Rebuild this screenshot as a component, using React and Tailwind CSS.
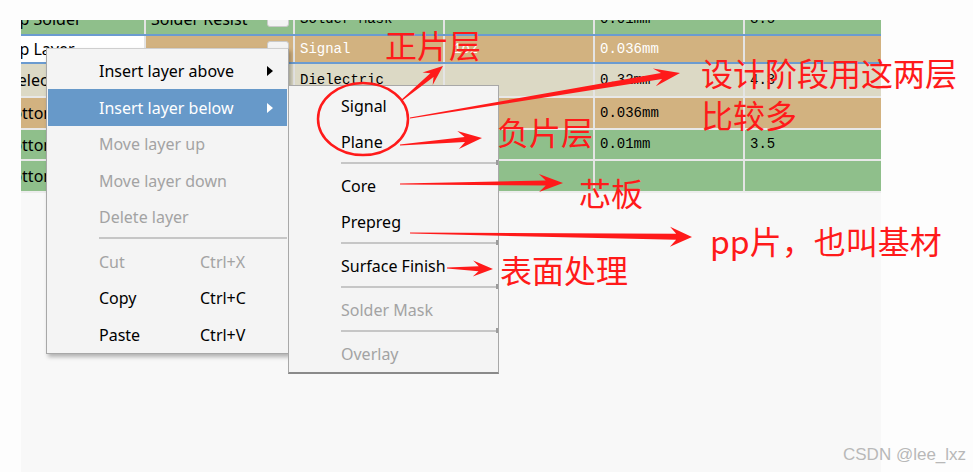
import React from "react";

// 表格行数据（列1被横向滚动裁掉一截）
const rows = [
  { h: "h-[30px] -mt-[16px]", bg: "bg-[#8fbf8b]", c1: "Top Solder", c2: "Solder Resist", box: true, c3: "Solder Mask", c4: "", c5: "0.01mm", c6: "3.5" },
  { h: "h-[30px] border-y-2 border-[#6b9bd0]", bg: "bg-[#d2b280]", sel: true, c1: "Top Layer", c2: "", box: true, c3: "Signal", c4: "1oz", c5: "0.036mm", c6: "" },
  { h: "h-[34px] border-b-2 border-[#e8e8e8]", bg: "bg-[#dcd9c5]", c1: "Dielectric 1", c2: "", c3: "Dielectric", c4: "", c5: "0.32mm", c6: "4.3" },
  { h: "h-[32px] border-b-2 border-[#e8e8e8]", bg: "bg-[#d2b280]", c1: "Bottom Layer", c2: "", c3: "Signal", c4: "", c5: "0.036mm", c6: "" },
  { h: "h-[31px] border-b-2 border-[#e8e8e8]", bg: "bg-[#8fbf8b]", c1: "Bottom Solder", c2: "", c3: "Solder Mask", c4: "", c5: "0.01mm", c6: "3.5" },
  { h: "h-[32px] border-b-2 border-[#ececec]", bg: "bg-[#8fbf8b]", c1: "Bottom Overlay", c2: "", c3: "", c4: "", c5: "", c6: "" },
];

const menu1 = [
  { label: "Insert layer above", arrow: true },
  { label: "Insert layer below", arrow: true, active: true },
  { label: "Move layer up", disabled: true },
  { label: "Move layer down", disabled: true },
  { label: "Delete layer", disabled: true },
  { sep: true },
  { label: "Cut", sc: "Ctrl+X", disabled: true },
  { label: "Copy", sc: "Ctrl+C" },
  { label: "Paste", sc: "Ctrl+V" },
];

const menu2 = [
  { label: "Signal" },
  { label: "Plane" },
  { sep: true },
  { label: "Core" },
  { label: "Prepreg" },
  { sep: true },
  { label: "Surface Finish" },
  { sep: true },
  { label: "Solder Mask", disabled: true },
  { sep: true },
  { label: "Overlay", disabled: true },
];

// 红色标注
const notes = [
  { text: "正片层", cls: "left-[385px] top-[28px]" },
  { text: "设计阶段用这两层", cls: "left-[701px] top-[56px]" },
  { text: "比较多", cls: "left-[701px] top-[98px]" },
  { text: "负片层", cls: "left-[497px] top-[115px]" },
  { text: "芯板", cls: "left-[579px] top-[176px]" },
  { text: "pp片，也叫基材", cls: "left-[710px] top-[224px]" },
  { text: "表面处理", cls: "left-[500px] top-[253px]" },
];

const arrows = [
  [402, 100, 443, 66, 20, 16, 5],
  [410, 118, 680, 73, 26, 18, 6],
  [400, 145, 482, 138, 24, 18, 5],
  [400, 184, 563, 183, 24, 18, 5],
  [410, 233, 692, 237, 22, 20, 6],
  [447, 268, 493, 269, 20, 16, 5],
];

function arrowPoints([x1, y1, x2, y2, head, headW, w1]) {
  const dx = x2 - x1;
  const dy = y2 - y1;
  const len = Math.hypot(dx, dy);
  const ux = dx / len;
  const uy = dy / len;
  const P = (u, v) => `${(x1 + ux * u - uy * v).toFixed(1)},${(y1 + uy * u + ux * v).toFixed(1)}`;
  return [
    P(len, 0),
    P(len - head, headW / 2),
    P(len - head * 0.72, w1 / 2),
    P(0, 0.6),
    P(0, -0.6),
    P(len - head * 0.72, -w1 / 2),
    P(len - head, -headW / 2),
  ].join(" ");
}

const ui = "font-['Noto_Sans',sans-serif] text-[16px]";
const mono = "font-['Liberation_Mono',monospace] text-[14px]";

function Row({ r }) {
  const txt = r.sel ? "text-white" : "text-black";
  return (
    <div className={`flex w-[860px] ${r.h}`}>
      <div className={`w-[125px] shrink-0 border-r-2 border-[#e4e4e4] overflow-hidden flex items-center ${r.sel ? "bg-white" : r.bg}`}>
        <span className={`-ml-[19px] whitespace-nowrap text-black ${ui}`}>{r.c1}</span>
      </div>
      <div className={`w-[149px] shrink-0 border-r-2 border-[#e4e4e4] flex items-center pl-[5px] pr-[4px] ${r.bg}`}>
        <span className={`whitespace-nowrap text-black ${ui}`}>{r.c2}</span>
        {r.box && <div className="ml-auto w-[22px] h-[16px] rounded-[3px] bg-[#f3f3f3] border border-[#cacaca]" />}
      </div>
      <div className={`w-[150px] shrink-0 border-r-2 border-[#e4e4e4] flex items-center pl-[5px] ${r.bg}`}>
        <span className={`whitespace-nowrap ${txt} ${mono}`}>{r.c3}</span>
      </div>
      <div className={`w-[150px] shrink-0 border-r-2 border-[#e4e4e4] flex items-center pl-[8px] ${r.bg}`}>
        <span className={`whitespace-nowrap ${txt} ${mono}`}>{r.c4}</span>
      </div>
      <div className={`w-[150px] shrink-0 border-r-2 border-[#e4e4e4] flex items-center pl-[5px] ${r.bg}`}>
        <span className={`whitespace-nowrap ${txt} ${mono}`}>{r.c5}</span>
      </div>
      <div className={`flex-1 flex items-center pl-[5px] ${r.bg}`}>
        <span className={`whitespace-nowrap ${txt} ${mono}`}>{r.c6}</span>
      </div>
    </div>
  );
}

function Tri({ white }) {
  return (
    <svg width="6" height="10" viewBox="0 0 6 10" className="ml-auto mr-[14px]">
      <polygon points="0,0 6,5 0,10" fill={white ? "#ffffff" : "#000000"} />
    </svg>
  );
}

function MainMenu() {
  return (
    <div className="absolute left-[46px] top-[48px] w-[243px] bg-[#f4f4f4] border border-[#a8a8a8] border-t-[#cfcfcf] px-[1px] pt-[3.75px] shadow-[2px_3px_4px_rgba(0,0,0,0.28)]">
      {menu1.map((m, i) =>
        m.sep ? (
          <div key={i} className="h-[8px] pt-[2px] pl-[51px]">
            <div className="h-[2px] bg-[#c6c6c6]" />
          </div>
        ) : (
          <div
            key={i}
            className={`h-[36.5px] flex items-center pl-[51px] ${ui} ${m.active ? "bg-[#6799c9] text-white" : m.disabled ? "text-[#a3a3a3]" : "text-black"}`}
          >
            <span className="w-[101px] whitespace-nowrap">{m.label}</span>
            {m.sc && <span className="whitespace-nowrap">{m.sc}</span>}
            {m.arrow && <Tri white={m.active} />}
          </div>
        )
      )}
    </div>
  );
}

function SubMenu() {
  return (
    <div className="absolute left-[288px] top-[85px] w-[211px] bg-[#f4f4f4] border border-[#a8a8a8] border-b-2 border-b-[#8a8a8a] pt-[2px]">
      {menu2.map((m, i) =>
        m.sep ? (
          <div key={i} className="h-[8px] pt-[1px] pl-[52px] flex items-start">
            <div className="flex-1 h-[2px] mt-[1px] bg-[#c6c6c6]" />
            <div className="w-[2px] h-[5px] -mt-[1px] bg-[#9c9c9c]" />
          </div>
        ) : (
          <div
            key={i}
            className={`h-[36px] flex items-center pl-[52px] ${ui} ${m.disabled ? "text-[#a3a3a3]" : "text-black"}`}
          >
            <span className="whitespace-nowrap">{m.label}</span>
          </div>
        )
      )}
    </div>
  );
}

export default function App() {
  return (
    <div className="relative w-[973px] h-[472px] overflow-hidden bg-[#fdfdfd]">
      {/* 层叠表格 */}
      <div className="ml-[21px] mt-[20px] w-[860px] h-[452px] bg-[#f8f8f8] overflow-hidden">
        {rows.map((r, i) => (
          <Row key={i} r={r} />
        ))}
      </div>

      <MainMenu />
      <SubMenu />

      {/* 圈和箭头 */}
      <svg className="absolute left-0 top-0 pointer-events-none" width="973" height="472" viewBox="0 0 973 472">
        <ellipse cx="363" cy="119" rx="45" ry="36" fill="none" stroke="#ff1a1a" strokeWidth="2.5" />
        {arrows.map((a, i) => (
          <polygon key={i} points={arrowPoints(a)} fill="#ff1a1a" />
        ))}
      </svg>

      {notes.map((n, i) => (
        <div
          key={i}
          className={`absolute ${n.cls} whitespace-nowrap leading-none text-[32px] text-[#ff1a1a] font-['Noto_Sans_CJK_SC','Noto_Sans',sans-serif]`}
        >
          {n.text}
        </div>
      ))}

      <div className="absolute left-[843px] top-[446px] leading-none text-[17px] text-[#b8b8b8] font-['Liberation_Sans',sans-serif] whitespace-nowrap">
        CSDN @lee_lxz
      </div>
    </div>
  );
}
